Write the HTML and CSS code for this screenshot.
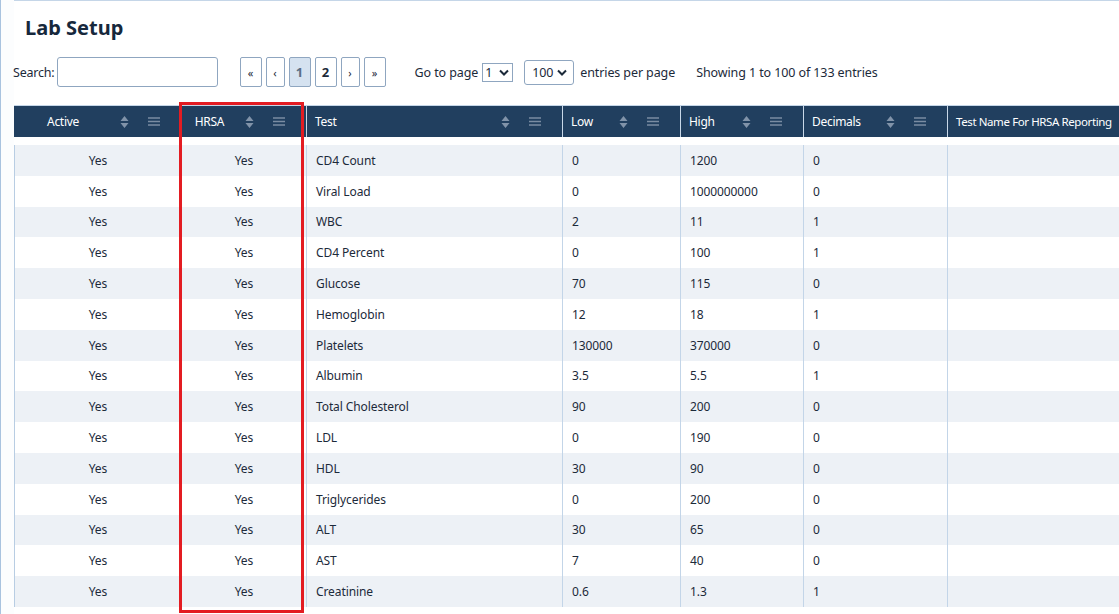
FILE: index.html
```html
<!DOCTYPE html>
<html lang="en">
<head>
  <meta charset="UTF-8">
  <title>Lab Setup</title>
  <link rel="stylesheet" href="styles.css">
</head>
<body>
  <div class="frame">
    <div class="panel">
      <h1 class="title">Lab Setup</h1>

      <div class="toolbar">
        <label class="search">Search: <input type="text" class="search-input"></label>
        <div class="pager">
          <button class="page-btn">&laquo;</button>
          <button class="page-btn narrow">&lsaquo;</button>
          <button class="page-btn active">1</button>
          <button class="page-btn bold">2</button>
          <button class="page-btn narrow">&rsaquo;</button>
          <button class="page-btn">&raquo;</button>
        </div>
        <div class="goto">
          Go to page
          <span class="select small">1 <svg width="10" height="7" viewBox="0 0 10 7"><path d="M1 1.5 L5 5.5 L9 1.5" fill="none" stroke="#1c2a3a" stroke-width="2"/></svg></span>
          <span class="select">100 <svg width="10" height="7" viewBox="0 0 10 7"><path d="M1 1.5 L5 5.5 L9 1.5" fill="none" stroke="#1c2a3a" stroke-width="2"/></svg></span>
          entries per page
        </div>
        <div class="info">Showing 1 to 100 of 133 entries</div>
      </div>

      <div class="grid">
        <div class="head" id="head"></div>
        <div class="rows" id="rows"></div>
      </div>
    </div>
  </div>

  <div class="highlight"></div>

  <script>
    const columns = [
      ['Active', 'c-active center', true],
      ['HRSA', 'c-hrsa center', true],
      ['Test', 'c-test', true],
      ['Low', 'c-low', true],
      ['High', 'c-high', true],
      ['Decimals', 'c-dec', true],
      ['Test Name For HRSA Reporting', 'c-name', false],
    ];

    const sortIcon = '<svg class="sort" width="9" height="14" viewBox="0 0 9 14">' +
      '<path d="M0.5 6 L4.5 1 L8.5 6 Z M0.5 8 L8.5 8 L4.5 13 Z" fill="#8193a9"/></svg>';
    const menuIcon = '<svg class="menu" width="12" height="9" viewBox="0 0 12 9">' +
      '<path d="M0 1 H12 M0 4.5 H12 M0 8 H12" stroke="#7a8ca2" stroke-width="1.3"/></svg>';

    const data = [
      ['CD4 Count', '0', '1200', '0'],
      ['Viral Load', '0', '1000000000', '0'],
      ['WBC', '2', '11', '1'],
      ['CD4 Percent', '0', '100', '1'],
      ['Glucose', '70', '115', '0'],
      ['Hemoglobin', '12', '18', '1'],
      ['Platelets', '130000', '370000', '0'],
      ['Albumin', '3.5', '5.5', '1'],
      ['Total Cholesterol', '90', '200', '0'],
      ['LDL', '0', '190', '0'],
      ['HDL', '30', '90', '0'],
      ['Triglycerides', '0', '200', '0'],
      ['ALT', '30', '65', '0'],
      ['AST', '7', '40', '0'],
      ['Creatinine', '0.6', '1.3', '1'],
    ];

    const head = document.getElementById('head');
    columns.forEach(([label, cls, icons]) => {
      const th = document.createElement('div');
      th.className = 'th ' + cls;
      th.innerHTML = `<span class="label">${label}</span>` + (icons ? sortIcon + menuIcon : '');
      head.appendChild(th);
    });

    const rows = document.getElementById('rows');
    data.forEach((r) => {
      const row = document.createElement('div');
      row.className = 'row';
      row.innerHTML =
        '<div class="td c-active center">Yes</div>' +
        '<div class="td c-hrsa center">Yes</div>' +
        `<div class="td c-test">${r[0]}</div>` +
        `<div class="td c-low">${r[1]}</div>` +
        `<div class="td c-high">${r[2]}</div>` +
        `<div class="td c-dec">${r[3]}</div>` +
        '<div class="td c-name"></div>';
      rows.appendChild(row);
    });
  </script>
</body>
</html>
```

FILE: styles.css
```css
/* Lab setup page */
html, body {
  margin: 0;
  height: 100%;
  overflow: hidden;
  background: #fff;
}

body {
  font-family: "Noto Sans", "Open Sans", sans-serif;
  color: #1c2a3a;
  font-size: 12.5px;
}

.frame {
  border-left: 1px solid #a9c3df;
  height: 100%;
  background: #fcfdfe;
}

.panel {
  margin-left: 13px;
  border-top: 1px solid #c5d6e8;
  background: #fff;
  height: 100%;
}

.title {
  margin: 0;
  padding: 13px 0 0 11px;
  height: 43px;
  box-sizing: border-box;
  font-size: 20px;
  font-weight: 700;
  color: #16283c;
  line-height: 28px;
}

/* toolbar */
.toolbar {
  display: flex;
  align-items: center;
  height: 30px;
  margin-top: 13px;
  margin-left: -1px;
  white-space: nowrap;
}

.search {
  display: flex;
  align-items: center;
  letter-spacing: -0.2px;
}

.search-input {
  width: 161px;
  height: 30px;
  box-sizing: border-box;
  margin: 0 0 0 2px;
  border: 1px solid #8fa6c0;
  border-radius: 3px;
}

.pager {
  display: flex;
  gap: 4px;
  margin-left: 22px;
}

.page-btn {
  width: 22px;
  height: 30px;
  padding: 0;
  border: 1px solid #8fa6c0;
  border-radius: 2px;
  background: #fff;
  color: #1c2a3a;
  font-family: inherit;
  font-size: 11px;
}

.page-btn.narrow {
  width: 19px;
}

.page-btn.active {
  background: #d5e2f0;
  color: #5a6f86;
  font-weight: 700;
  font-size: 13px;
}

.page-btn.bold {
  font-weight: 700;
  font-size: 13px;
}

.goto {
  display: flex;
  align-items: center;
  margin-left: 29px;
  letter-spacing: -0.1px;
}

.select {
  display: inline-flex;
  align-items: center;
  justify-content: space-between;
  box-sizing: border-box;
  width: 50px;
  height: 25px;
  padding: 0 6px 0 7px;
  margin: 0 6px;
  border: 1px solid #8fa6c0;
  border-radius: 3px;
}

.select.small {
  width: 31px;
  height: 19px;
  padding: 0 3px 0 2px;
  border-radius: 0;
  margin: 0 5px 0 4px;
}

.info {
  margin-left: 21px;
  letter-spacing: -0.1px;
}

/* table */
.grid {
  margin-top: 18px;
  width: 1200px;
}

.head {
  display: flex;
  height: 32px;
  box-sizing: border-box;
  background: #213f5f;
  border-top: 1px solid #c5d6e8;
  margin-bottom: 8px;
}

.th {
  display: flex;
  align-items: center;
  box-sizing: border-box;
  padding: 0 21px 0 8px;
  color: #fff;
  font-size: 12px;
  letter-spacing: -0.3px;
  border-right: 1px solid #c9d8e8;
  white-space: nowrap;
}

.th .label {
  flex: 1;
}

.th.center {
  padding-left: 0;
}

.th.center .label {
  text-align: center;
  margin-right: 8px;
}

.th.c-name {
  font-size: 11.5px;
  letter-spacing: -0.4px;
}

.sort {
  flex: none;
  margin-right: 19px;
}

.menu {
  flex: none;
}

.rows {
  border-left: 1px solid #b8cde3;
}

.row {
  display: flex;
  height: 30.8px;
}

.row:nth-child(odd) {
  background: #edf1f6;
}

.td {
  display: flex;
  align-items: center;
  box-sizing: border-box;
  padding-left: 9px;
  font-size: 12px;
  letter-spacing: -0.1px;
  border-right: 1px solid #c3d5e8;
}

.td.center {
  justify-content: center;
  padding-left: 0;
}

.c-active { width: 168px; }
.c-hrsa { width: 125px; }
.c-test { width: 256px; }
.c-low { width: 118px; }
.c-high { width: 123px; }
.c-dec { width: 144px; }
.c-name { width: 260px; }

.rows .c-active { width: 167px; }

/* annotation box around the HRSA column */
.highlight {
  position: absolute;
  left: 179px;
  top: 102px;
  width: 119px;
  height: 505px;
  border: 3px solid #e31c22;
}
```
